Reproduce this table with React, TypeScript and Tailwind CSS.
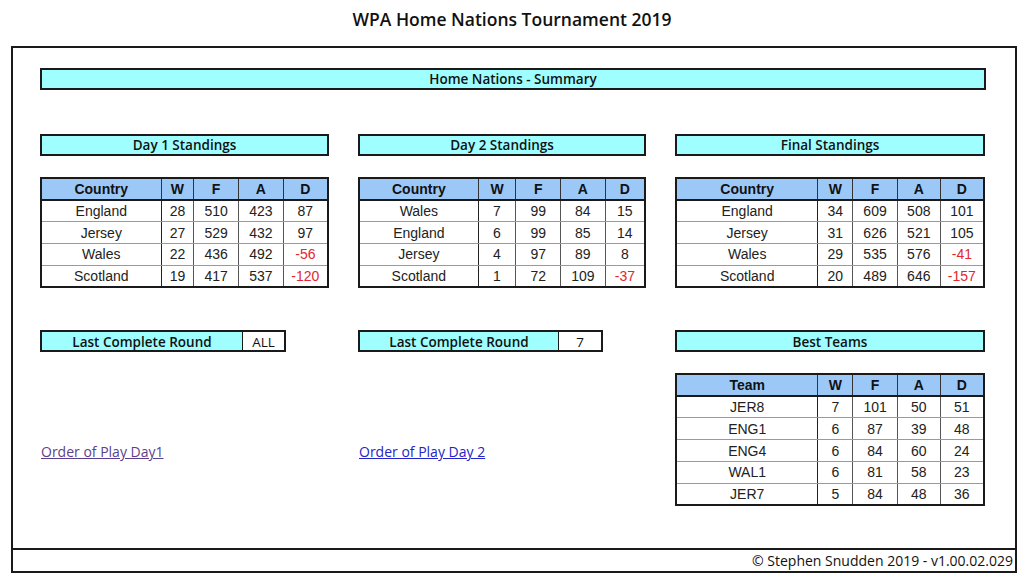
import React from "react";

type Row = (string | number)[];

const SANS = "font-['Open_Sans',sans-serif]";
const ARIAL = "font-['Liberation_Sans',Arial,sans-serif]";

function Heading({ text }: { text: string }) {
  return (
    <div className={`h-[22px] border-2 border-[#1a1a1a] bg-[#9ffeff] flex items-center justify-center pt-[1px] text-[13.5px] font-semibold text-[#111] ${SANS}`}>
      {text}
    </div>
  );
}

function StatTable({ first, widths, rows }: { first: string; widths: number[]; rows: Row[] }) {
  const heads = [first, "W", "F", "A", "D"];
  return (
    <table className={`border-collapse border-2 border-[#1a1a1a] ${ARIAL} text-[14px] text-[#222] table-fixed`}>
      <colgroup>
        {widths.map((w, i) => (
          <col key={i} style={{ width: w }} />
        ))}
      </colgroup>
      <thead>
        <tr className="h-[22px] bg-[#9cc8f8]">
          {heads.map((h) => (
            <th key={h} className="border border-[#333] border-b-2 border-b-[#1a1a1a] font-bold p-0 leading-none text-[#111]">
              {h}
            </th>
          ))}
        </tr>
      </thead>
      <tbody>
        {rows.map((r, i) => (
          <tr key={i} className="h-[21.8px] bg-white">
            {r.map((c, j) => {
              const neg = j === 4 && String(c).startsWith("-");
              return (
                <td
                  key={j}
                  className={`border-y border-y-[#9a9a9a] border-x border-x-[#555] p-0 text-center leading-none ${j === 0 ? "border-r-[#222]" : ""} ${neg ? "text-[#e0282e]" : ""}`}
                >
                  {c}
                </td>
              );
            })}
          </tr>
        ))}
      </tbody>
    </table>
  );
}

function LastRound({ value, labelW, valW }: { value: string; labelW: string; valW: string }) {
  return (
    <div className={`flex h-[22px] border-2 border-[#1a1a1a] ${SANS} text-[13.5px]`}>
      <div className={`${labelW} bg-[#9ffeff] border-r border-[#1a1a1a] flex items-center justify-center pt-[1px] font-semibold text-[#111]`}>
        Last Complete Round
      </div>
      <div className={`${valW} bg-white flex items-center justify-center pt-[1px] text-[#111]`}>{value}</div>
    </div>
  );
}

export default function App() {
  const day1: Row[] = [
    ["England", 28, 510, 423, 87],
    ["Jersey", 27, 529, 432, 97],
    ["Wales", 22, 436, 492, "-56"],
    ["Scotland", 19, 417, 537, "-120"],
  ];
  const day2: Row[] = [
    ["Wales", 7, 99, 84, 15],
    ["England", 6, 99, 85, 14],
    ["Jersey", 4, 97, 89, 8],
    ["Scotland", 1, 72, 109, "-37"],
  ];
  const fin: Row[] = [
    ["England", 34, 609, 508, 101],
    ["Jersey", 31, 626, 521, 105],
    ["Wales", 29, 535, 576, "-41"],
    ["Scotland", 20, 489, 646, "-157"],
  ];
  const best: Row[] = [
    ["JER8", 7, 101, 50, 51],
    ["ENG1", 6, 87, 39, 48],
    ["ENG4", 6, 84, 60, 24],
    ["WAL1", 6, 81, 58, 23],
    ["JER7", 5, 84, 48, 36],
  ];

  return (
    <div className="w-[1024px] h-[583px] bg-white overflow-hidden">
      <div className={`h-[46px] pt-[6px] text-center text-[17.5px] font-semibold text-[#111] ${SANS}`}>
        WPA Home Nations Tournament 2019
      </div>
      <div className="ml-[11px] w-[1006px] h-[527px] border-2 border-[#1a1a1a] flex flex-col">
        <div className="flex-1 pl-[27px] pt-[20px]">
          <div className="w-[946px]">
            <Heading text="Home Nations - Summary" />
          </div>
          <div className="grid grid-cols-[289px_288px_310px] gap-x-[29px] mt-[44px] items-start">
            <div className="flex flex-col">
              <Heading text="Day 1 Standings" />
              <div className="mt-[21px]">
                <StatTable first="Country" widths={[121, 33, 45, 45, 45]} rows={day1} />
              </div>
              <div className="mt-[42px] w-[246px]">
                <LastRound value="ALL" labelW="w-[201px]" valW="flex-1" />
              </div>
              <a className={`mt-[89px] ml-[1px] text-[14px] underline text-[#5b3f8e] ${SANS}`} href="#">
                Order of Play Day1
              </a>
            </div>
            <div className="flex flex-col">
              <Heading text="Day 2 Standings" />
              <div className="mt-[21px]">
                <StatTable first="Country" widths={[120, 38, 45, 45, 40]} rows={day2} />
              </div>
              <div className="mt-[42px] w-[245px]">
                <LastRound value="7" labelW="w-[199px]" valW="flex-1" />
              </div>
              <a className={`mt-[89px] ml-[1px] text-[14px] underline text-[#2323c8] ${SANS}`} href="#">
                Order of Play Day 2
              </a>
            </div>
            <div className="flex flex-col">
              <Heading text="Final Standings" />
              <div className="mt-[21px]">
                <StatTable first="Country" widths={[143, 35, 45, 43, 44]} rows={fin} />
              </div>
              <div className="mt-[42px]">
                <Heading text="Best Teams" />
              </div>
              <div className="mt-[21px]">
                <StatTable first="Team" widths={[143, 35, 45, 43, 44]} rows={best} />
              </div>
            </div>
          </div>
        </div>
        <div className={`h-[23px] border-t-2 border-[#1a1a1a] flex items-center justify-end pr-[2px] text-[14px] text-[#111] ${SANS}`}>
          © Stephen Snudden 2019 - v1.00.02.029
        </div>
      </div>
    </div>
  );
}
